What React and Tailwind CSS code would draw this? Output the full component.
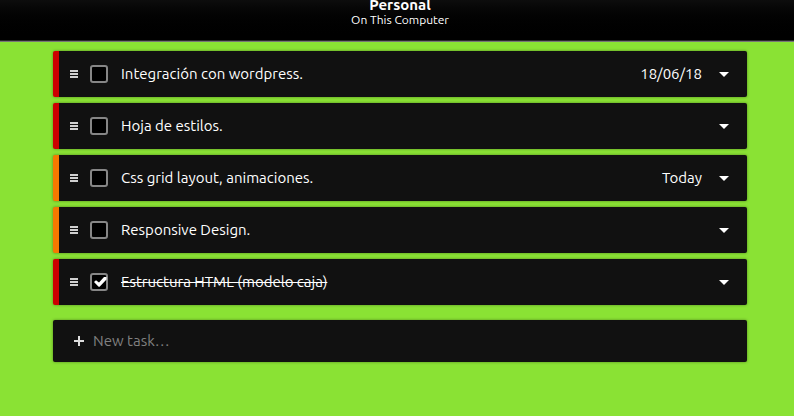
import { useState } from "react";

const initialTasks = [
  { id: 1, title: "Integración con wordpress.", due: "18/06/18", priority: "high", done: false },
  { id: 2, title: "Hoja de estilos.", due: "", priority: "high", done: false },
  { id: 3, title: "Css grid layout, animaciones.", due: "Today", priority: "medium", done: false },
  { id: 4, title: "Responsive Design.", due: "", priority: "medium", done: false },
  { id: 5, title: "Estructura HTML (modelo caja)", due: "", priority: "high", done: true },
];

const priorityBorder = {
  high: "border-[#cc0000]",
  medium: "border-[#f57900]",
};

function Task({ task, onToggle }) {
  const inputId = `task-${task.id}`;
  return (
    <li
      className={`flex h-[46px] items-center rounded-xs border-l-6 bg-[#111111] pr-[13px] pl-[11px] shadow-[0_0_3px_rgba(0,0,0,0.4)] ${priorityBorder[task.priority]}`}
    >
      <svg className="h-2 w-2 shrink-0" viewBox="0 0 8 8" fill="#d0d0d0" shapeRendering="crispEdges" aria-hidden="true">
        <rect width="8" height="2" />
        <rect y="3" width="8" height="2" />
        <rect y="6" width="8" height="2" />
      </svg>
      <span className="ml-3 grid h-[18px] w-[18px] shrink-0">
        <input
          id={inputId}
          type="checkbox"
          checked={task.done}
          onChange={() => onToggle(task.id)}
          className="col-start-1 row-start-1 h-[18px] w-[18px] appearance-none rounded-[3px] border-2 border-[#868686] bg-black"
        />
        {task.done && (
          <svg className="pointer-events-none col-start-1 row-start-1 h-[18px] w-[18px]" viewBox="0 0 18 18" aria-hidden="true">
            <path d="M4 9L6 7.2L9 9.5L14 4L16.5 4V6.5L9.6 13.8H8.6Z" fill="#ffffff" />
          </svg>
        )}
      </span>
      <label htmlFor={inputId} className={`ml-[13px] min-w-0 flex-1 truncate ${task.done ? "line-through" : ""}`}>
        {task.title}
      </label>
      {task.due && <span className="mr-3 shrink-0">{task.due}</span>}
      <button type="button" aria-label="Task details" className="flex h-6 w-5 shrink-0 items-center justify-center">
        <svg className="h-[5px] w-[10px]" viewBox="0 0 10 5" fill="#ffffff" aria-hidden="true">
          <path d="M0 0H10L5 5Z" />
        </svg>
      </button>
    </li>
  );
}

export default function App() {
  const [tasks, setTasks] = useState(initialTasks);
  const toggle = (id) => setTasks(tasks.map((t) => (t.id === id ? { ...t, done: !t.done } : t)));

  return (
    <div className="min-h-screen bg-[#8ae234] font-['Ubuntu','Noto_Sans',sans-serif] text-[15px] leading-5 text-white">
      <header className="flex flex-col items-center gap-[2px] border-b border-[#777777] bg-linear-to-b from-[#0d0d0d] to-black pb-[14px] pl-[6px] shadow-[inset_0_-1px_0_#2a2a2a]">
        <h1 className="text-[15px] leading-[10px] font-bold">Personal</h1>
        <p className="text-xs leading-[15px]">On This Computer</p>
      </header>
      <main className="pt-[9px] pr-[47px] pb-10 pl-[53px]">
        <ul className="flex flex-col gap-[6px]">
          {tasks.map((task) => (
            <Task key={task.id} task={task} onToggle={toggle} />
          ))}
        </ul>
        <form
          className="mt-[15px] flex h-[42px] items-center rounded-xs bg-[#111111] px-[21px] shadow-[0_0_3px_rgba(0,0,0,0.4)]"
          onSubmit={(e) => e.preventDefault()}
        >
          <svg className="h-[10px] w-[10px] shrink-0" viewBox="0 0 10 10" fill="#dddddd" shapeRendering="crispEdges" aria-hidden="true">
            <path d="M4 0H6V4H10V6H6V10H4V6H0V4H4Z" />
          </svg>
          <input
            type="text"
            aria-label="New task"
            placeholder="New task…"
            className="ml-[9px] min-w-0 flex-1 bg-transparent outline-none placeholder:text-[#808080]"
          />
        </form>
      </main>
    </div>
  );
}
